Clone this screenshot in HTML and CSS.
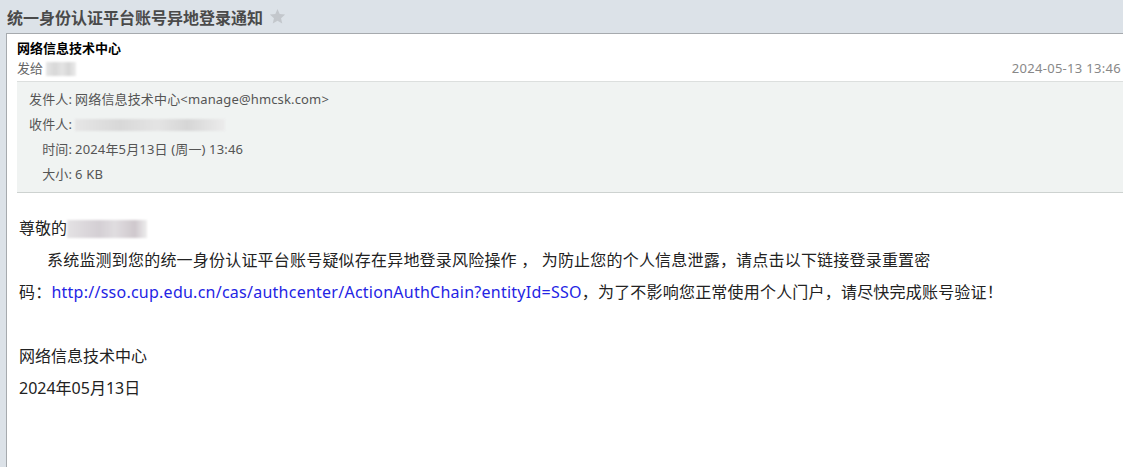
FILE: index.html
```html
<!DOCTYPE html>
<html lang="zh-CN">
<head>
    <meta charset="UTF-8">
    <title>统一身份认证平台账号异地登录通知</title>
    <link rel="stylesheet" href="styles.css">
</head>
<body>
    <div class="subject">
        统一身份认证平台账号异地登录通知
        <svg class="star" width="17" height="17" viewBox="0 0 24 24">
            <path d="M12 1.5l3.1 7.1 7.7.7-5.8 5.1 1.7 7.6L12 18l-6.7 4 1.7-7.6-5.8-5.1 7.7-.7z" fill="#c3c7cc"/>
        </svg>
    </div>

    <div class="mail">
        <div class="mail-head">
            <div class="from-name">网络信息技术中心</div>
            <div class="meta-row">
                <span>发给 <span class="masked masked-sm"></span></span>
                <span class="date">2024-05-13 13:46</span>
            </div>
        </div>

        <!-- original header block -->
        <div class="headers">
            <span class="label">发件人:</span>
            <span>网络信息技术中心&lt;manage@hmcsk.com&gt;</span>
            <span class="label">收件人:</span>
            <span><span class="masked masked-lg"></span></span>
            <span class="label">时间:</span>
            <span>2024年5月13日 (周一) 13:46</span>
            <span class="label">大小:</span>
            <span>6 KB</span>
        </div>

        <div class="content">
            <p>尊敬的<span class="masked masked-md"></span></p>
            <p class="indent">系统监测到您的统一身份认证平台账号疑似存在异地登录风险操作&nbsp;，&nbsp;为防止您的个人信息泄露，请点击以下链接登录重置密<br>码：<a href="#">http://sso.cup.edu.cn/cas/authcenter/ActionAuthChain?entityId=SSO</a>，为了不影响您正常使用个人门户，请尽快完成账号验证！</p>
            <p>&nbsp;</p>
            <p>网络信息技术中心</p>
            <p>2024年05月13日</p>
        </div>
    </div>
</body>
</html>
```

FILE: styles.css
```css
body {
    margin: 0;
    background: #dce2e8;
    font-family: "Noto Sans", "Noto Sans CJK SC", sans-serif;
    color: #222;
    overflow: hidden;
}

.subject {
    height: 33px;
    padding: 0 7px;
    display: flex;
    align-items: center;
    gap: 6px;
    font-size: 16px;
    font-weight: bold;
    color: #4a4a4a;
}

.star {
    margin-top: -1px;
}

.mail {
    margin-left: 6px;
    min-height: 440px;
    background: #fff;
    border-top: 1px solid #a6aaae;
    border-left: 1px solid #a6aaae;
}

.mail-head {
    padding: 4px 2px 0 10px;
    font-size: 13px;
    line-height: 20px;
}

.from-name {
    font-weight: bold;
    color: #000;
}

.meta-row {
    display: flex;
    justify-content: space-between;
    color: #666;
}

.date {
    color: #888;
    letter-spacing: 0.3px;
}

.masked {
    display: inline-block;
    vertical-align: middle;
    height: 14px;
    margin-top: -2px;
    background: linear-gradient(90deg, #e6e6e6, #d8d8d8 30%, #e4e4e4 55%, #d6d6d6 75%, #ececec);
    filter: blur(1px);
}

.masked-sm {
    width: 30px;
}

.masked-lg {
    width: 150px;
    height: 12px;
}

.masked-md {
    width: 80px;
    height: 18px;
    background: linear-gradient(90deg, #e4e2e4, #d4cfd4 40%, #e0dde0 60%, #cfc8cd 85%, #eeeeee);
}

.headers {
    margin: 3px 0 0 10px;
    padding: 5px 12px 5px;
    display: grid;
    grid-template-columns: max-content 1fr;
    column-gap: 3px;
    background: #f0f3f2;
    border-top: 1px solid #dcdfde;
    border-bottom: 1px solid #cdd2d0;
    font-size: 13px;
    line-height: 25px;
    color: #555;
    letter-spacing: 0.15px;
}

.label {
    text-align: right;
}

.content {
    padding: 19px 12px;
    font-size: 16px;
    line-height: 32px;
}

.content p {
    margin: 0;
    white-space: nowrap;
}

.indent {
    text-indent: 28px;
    letter-spacing: 0.2px;
}

.content a {
    color: #2424e4;
    text-decoration: none;
    letter-spacing: 0.25px;
}
```
